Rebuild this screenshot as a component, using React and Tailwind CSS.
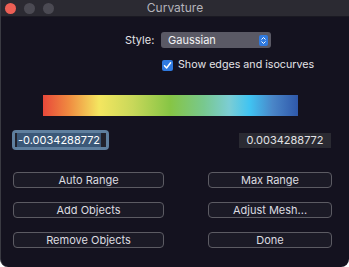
import React from "react";

const font = { fontFamily: "Inter, 'Liberation Sans', sans-serif" };

function Btn({ children, className = "" }) {
  return (
    <div
      className={`h-[16px] flex items-center justify-center rounded-[4px] border border-[#5c5b63] bg-[#1b1a26] text-[11px] leading-none text-[#dcdce0] ${className}`}
    >
      {children}
    </div>
  );
}

export default function App() {
  return (
    <div
      className="w-[349px] h-[267px] bg-[#14121f] flex flex-col overflow-hidden border-l border-[#3a3a42] rounded-b-[8px]"
      style={font}
    >
      {/* title bar */}
      <div className="h-[17px] bg-[#2b2a32] flex items-center relative shrink-0 border-b border-[#1a1922]">
        <div className="flex gap-[8px] pl-[4px]">
          <div className="w-[11px] h-[11px] rounded-full bg-[#ec5f55]" />
          <div className="w-[11px] h-[11px] rounded-full bg-[#4b4a53]" />
          <div className="w-[11px] h-[11px] rounded-full bg-[#4b4a53]" />
        </div>
        <div className="absolute inset-0 flex items-center justify-center text-[12px] text-[#b4b3bb]">
          Curvature
        </div>
      </div>

      {/* style row */}
      <div className="flex items-center pl-[124px] mt-[15px] h-[16px]">
        <span className="text-[11px] text-[#e4e4e8] w-[36px]">Style:</span>
        <div className="w-[110px] h-[16px] rounded-[3px] bg-[#5a5965] flex items-center justify-between pl-[7px] pr-[3px]">
          <span className="text-[11px] text-[#f2f2f4] leading-none">Gaussian</span>
          <div className="w-[9px] h-[11px] rounded-[2px] bg-[#2f7ae0] flex flex-col items-center justify-center gap-[1px]">
            <svg width="5" height="3" viewBox="0 0 5 3"><path d="M0.5 2.5 L2.5 0.5 L4.5 2.5" stroke="white" strokeWidth="1" fill="none" /></svg>
            <svg width="5" height="3" viewBox="0 0 5 3"><path d="M0.5 0.5 L2.5 2.5 L4.5 0.5" stroke="white" strokeWidth="1" fill="none" /></svg>
          </div>
        </div>
      </div>

      {/* checkbox row */}
      <div className="flex items-center pl-[161px] mt-[11px] h-[12px]">
        <div className="w-[11px] h-[11px] rounded-[2px] bg-[#2f7ae0] flex items-center justify-center">
          <svg width="9" height="9" viewBox="0 0 9 9"><path d="M1.5 4.8 L3.6 7 L7.6 1.8" stroke="white" strokeWidth="1.5" fill="none" strokeLinecap="round" strokeLinejoin="round" /></svg>
        </div>
        <span className="ml-[5px] text-[10.7px] text-[#e4e4e8] leading-none">Show edges and isocurves</span>
      </div>

      {/* gradient */}
      <div
        className="ml-[42px] mt-[24px] w-[255px] h-[21px] shrink-0 bg-[linear-gradient(to_right,#e8483a_0%,#f08a40_10%,#f4e660_22%,#c9d85a_35%,#86c545_50%,#78c88e_63%,#7ccdd4_73%,#40c4f2_81%,#4a86c8_90%,#2f58aa_100%)]"
      />

      {/* fields */}
      <div className="flex items-start justify-between pl-[11px] pr-[18px] mt-[14px]">
        <div className="w-[97px] h-[20px] rounded-[4px] bg-[#5f7f9e] p-[3px]">
          <div className="w-full h-full bg-[#22222c] flex items-center px-[2px]">
            <span className="bg-[#3b5878] text-[11px] text-white leading-[14px] px-[1px]">-0.0034288772</span>
          </div>
        </div>
        <div className="mt-[3px] w-[92px] h-[15px] bg-[#2a2a32] flex items-center justify-center text-[11px] text-[#e2e2e6] leading-none">
          0.0034288772
        </div>
      </div>

      {/* buttons */}
      <div className="grid grid-cols-[151px_124px] justify-between pl-[12px] pr-[17px] mt-[22px] gap-y-[14px]">
        <Btn>Auto Range</Btn>
        <Btn>Max Range</Btn>
        <Btn>Add Objects</Btn>
        <Btn>Adjust Mesh...</Btn>
        <Btn>Remove Objects</Btn>
        <Btn>Done</Btn>
      </div>
    </div>
  );
}
